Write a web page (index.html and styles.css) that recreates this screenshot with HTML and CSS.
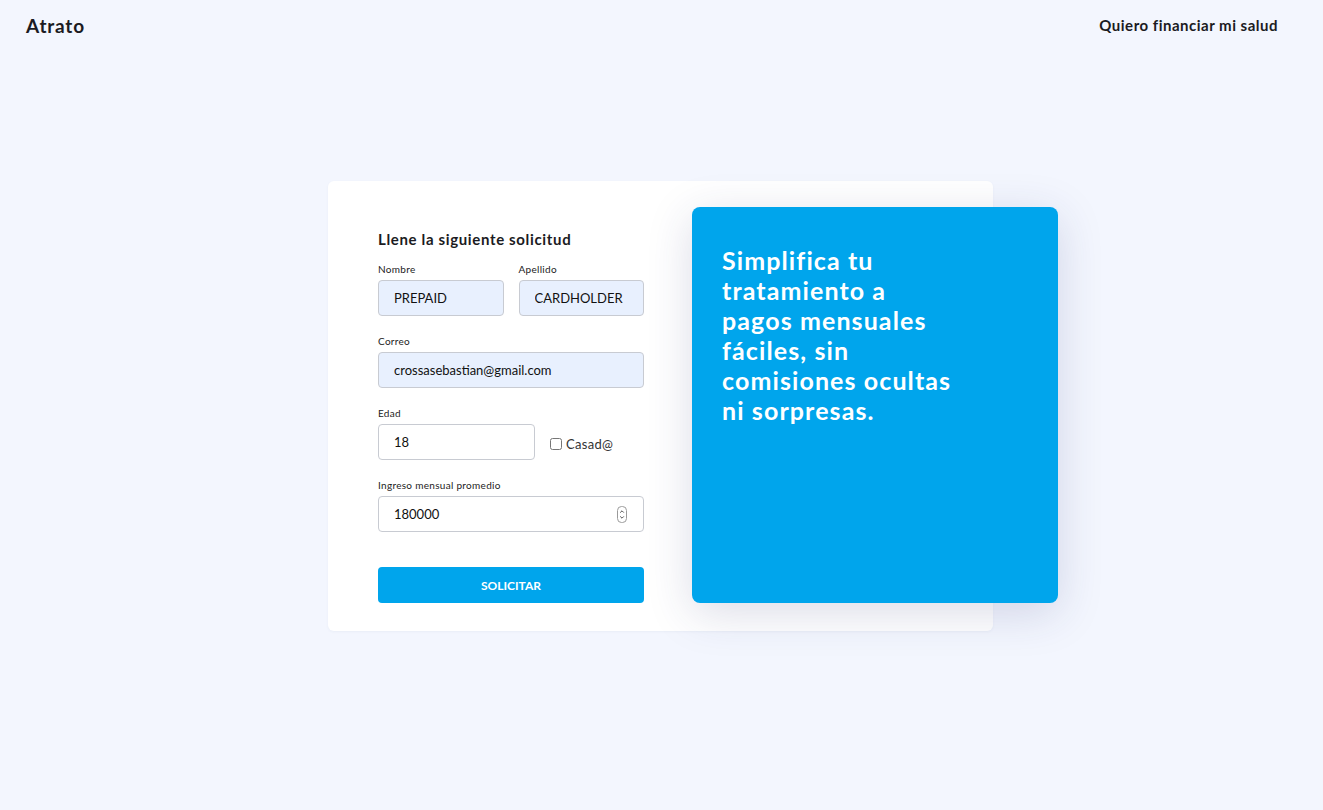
FILE: index.html
```html
<!DOCTYPE html>
<html lang="es">
<head>
<meta charset="utf-8">
<title>Atrato</title>
<link rel="stylesheet" href="styles.css">
</head>
<body>
<header class="topbar">
  <div class="brand">Atrato</div>
  <a class="nav-link" href="#">Quiero financiar mi salud</a>
</header>
<main class="stage">
  <section class="card">
    <form class="form">
      <h2 class="form-title">Llene la siguiente solicitud</h2>
      <div class="row">
        <div class="field">
          <label class="label">Nombre</label>
          <input class="input filled" type="text" value="PREPAID">
        </div>
        <div class="field">
          <label class="label">Apellido</label>
          <input class="input filled" type="text" value="CARDHOLDER">
        </div>
      </div>
      <div class="field">
        <label class="label">Correo</label>
        <input class="input filled" type="email" value="crossasebastian@gmail.com">
      </div>
      <div class="row row-age">
        <div class="field field-age">
          <label class="label">Edad</label>
          <input class="input" type="text" value="18">
        </div>
        <label class="check"><input type="checkbox" class="checkbox"> Casad@</label>
      </div>
      <div class="field">
        <label class="label">Ingreso mensual promedio</label>
        <div class="number-wrap">
          <input class="input" type="number" value="180000">
          <svg class="spinner" width="10" height="17" viewBox="0 0 10 17" aria-hidden="true">
            <rect x="0.5" y="0.5" width="9" height="16" rx="4" fill="#fff" stroke="#9a9a9a"/>
            <path d="M3.2 6.6 L5 4.8 L6.8 6.6" fill="none" stroke="#555" stroke-width="1"/>
            <path d="M3.2 10.4 L5 12.2 L6.8 10.4" fill="none" stroke="#555" stroke-width="1"/>
          </svg>
        </div>
      </div>
      <button class="submit" type="button">SOLICITAR</button>
    </form>
    <aside class="promo">
      <p class="promo-text">Simplifica tu<br>tratamiento a<br>pagos mensuales<br>fáciles, sin<br>comisiones ocultas<br>ni sorpresas.</p>
    </aside>
  </section>
</main>
</body>
</html>
```

FILE: styles.css
```css
* { box-sizing: border-box; }
html, body { height: 100%; }
body {
  margin: 0;
  background: #f3f6fe;
  font-family: "Lato", "Noto Sans", sans-serif;
  color: #1b1b22;
  display: flex;
  flex-direction: column;
}
.topbar {
  height: 52px;
  display: flex;
  align-items: center;
  justify-content: space-between;
  padding: 0 45px 2px 26px;
  flex: none;
}
.brand {
  font-size: 19px;
  font-weight: 700;
  letter-spacing: 0.8px;
}
.nav-link {
  font-size: 15px;
  font-weight: 700;
  color: #1b1b22;
  text-decoration: none;
  letter-spacing: 0.5px;
}
.stage {
  flex: 1;
  display: flex;
  justify-content: center;
  align-items: flex-start;
  padding-top: 129px;
  padding-right: 2px;
}
.card {
  width: 665px;
  height: 450px;
  background: #fff;
  border-radius: 6px;
  display: flex;
  align-items: flex-start;
  box-shadow: 0 1px 3px rgba(60, 70, 120, 0.05);
}
.form {
  width: 364px;
  flex: none;
  padding: 47px 48px 0 50px;
  display: flex;
  flex-direction: column;
}
.form-title {
  margin: 0 0 12px;
  font-size: 15px;
  line-height: 22px;
  font-weight: 700;
  letter-spacing: 0.65px;
}
.row {
  display: flex;
  gap: 15px;
}
.row .field { flex: 1; }
.field {
  display: flex;
  flex-direction: column;
  margin-bottom: 18px;
}
.label {
  font-size: 10px;
  line-height: 14px;
  margin-bottom: 4px;
  color: #222;
  letter-spacing: 0.3px;
}
.input {
  height: 36px;
  width: 100%;
  border: 1px solid #c8cbd2;
  border-radius: 4px;
  padding: 0 10px 0 15px;
  font-family: "Lato", "Noto Sans", sans-serif;
  font-size: 13px;
  color: #111;
  background: #fff;
  outline: none;
}
.input.filled { background: #e8f0fe; }
.number-wrap { position: relative; }
.input[type=number] { -moz-appearance: textfield; }
.input[type=number]::-webkit-inner-spin-button,
.input[type=number]::-webkit-outer-spin-button { -webkit-appearance: none; margin: 0; }
.spinner {
  position: absolute;
  right: 17px;
  top: 10px;
}
.row-age { align-items: flex-start; }
.field-age { flex: 0 0 157px !important; }
.check {
  margin-top: 18px;
  display: flex;
  align-items: center;
  height: 36px;
  font-size: 13px;
  color: #333;
  gap: 4px;
  padding-top: 4px;
  letter-spacing: 0.3px;
}
.checkbox { margin: 0; width: 12px; height: 12px; }
.submit {
  margin-top: 17px;
  height: 36px;
  width: 100%;
  border: 0;
  border-radius: 4px;
  background: #00a5ec;
  color: #fff;
  font-family: "Lato", "Noto Sans", sans-serif;
  font-size: 12px;
  font-weight: 700;
  padding-bottom: 1px;
}
.promo {
  width: 366px;
  height: 396px;
  margin-top: 26px;
  margin-right: -65px;
  flex: none;
  background: #00a5ec;
  border-radius: 8px;
  box-shadow: 0 10px 45px rgba(40, 50, 110, 0.17);
  padding: 38px 30px;
}
.promo-text {
  margin: 0;
  color: #fff;
  font-size: 25px;
  line-height: 30px;
  font-weight: 700;
  letter-spacing: 1.1px;
}
```
